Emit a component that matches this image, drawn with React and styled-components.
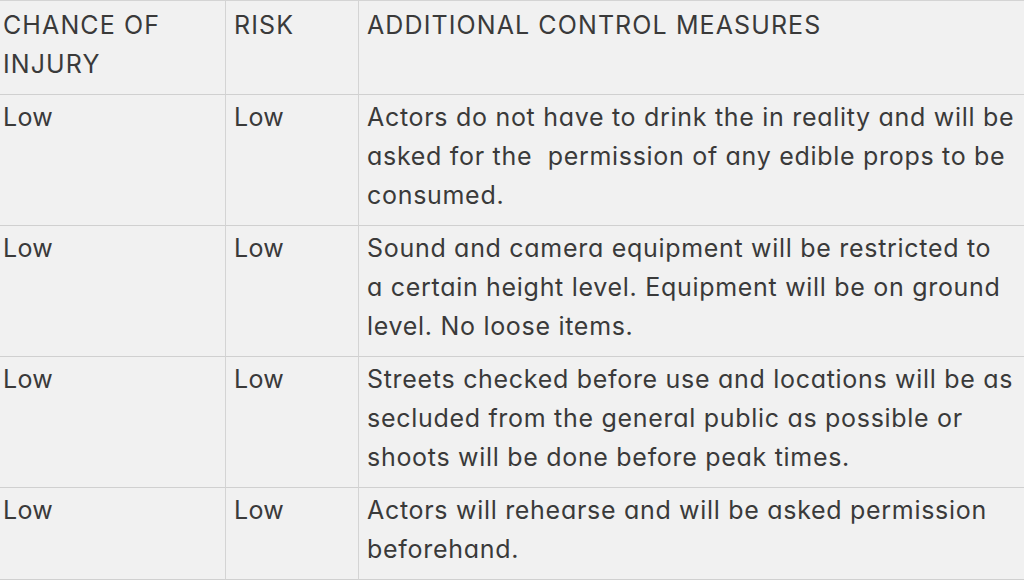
import React from 'react'
import styled, { createGlobalStyle } from 'styled-components'

const rows = [
  {
    chance: 'Low',
    risk: 'Low',
    lines: [
      'Actors do not have to drink the in reality and will be',
      'asked for the  permission of any edible props to be',
      'consumed.',
    ],
  },
  {
    chance: 'Low',
    risk: 'Low',
    lines: [
      'Sound and camera equipment will be restricted to',
      'a certain height level. Equipment will be on ground',
      'level. No loose items.',
    ],
  },
  {
    chance: 'Low',
    risk: 'Low',
    lines: [
      'Streets checked before use and locations will be as',
      'secluded from the general public as possible or',
      'shoots will be done before peak times.',
    ],
  },
  {
    chance: 'Low',
    risk: 'Low',
    lines: ['Actors will rehearse and will be asked permission', 'beforehand.'],
  },
]

function App() {
  return (
    <Page>
      <Global />
      <Table>
        <Cell $head>
          CHANCE OF
          <br />
          INJURY
        </Cell>
        <Cell $head>RISK</Cell>
        <Cell $head $last>ADDITIONAL CONTROL MEASURES</Cell>
        {rows.map((r, i) => (
          <React.Fragment key={i}>
            <Cell $h={i === 3 ? 92 : 131}>{r.chance}</Cell>
            <Cell $h={i === 3 ? 92 : 131}>{r.risk}</Cell>
            <Cell $h={i === 3 ? 92 : 131} $last $body>
              {r.lines.map((l, j) => (
                <Line key={j}>{l}</Line>
              ))}
            </Cell>
          </React.Fragment>
        ))}
      </Table>
    </Page>
  )
}

export default App

const Global = createGlobalStyle`
  html, body {
    margin: 0;
    padding: 0;
    background: #f1f1f1;
    overflow: hidden;
  }
`

const Page = styled.div`
  width: 1024px;
  height: 580px;
  overflow: hidden;
  background: #f1f1f1;
`

const Table = styled.div`
  display: grid;
  grid-template-columns: 231px 133px 720px;
  margin-left: -5px;
  border-top: 1px solid #d4d4d4;
`

const Cell = styled.div`
  box-sizing: border-box;
  height: ${(p) => (p.$head ? 94 : p.$h)}px;
  padding: ${(p) => (p.$head ? '5px' : '3px')} 8px 0 8px;
  border-right: ${(p) => (p.$last ? 'none' : '1px solid #d4d4d4')};
  border-bottom: 1px solid #d0d0d0;
  font-family: Inter, "Liberation Sans", sans-serif;
  font-feature-settings: ${(p) => (p.$body ? '"cv11" 1' : 'normal')};
  font-size: 25px;
  letter-spacing: ${(p) => (p.$body ? '0.7px' : p.$head ? '1.1px' : '0.3px')};
  line-height: 39px;
  color: #3a3a3a;
  white-space: pre;
`

const Line = styled.div`
  white-space: pre;
`
